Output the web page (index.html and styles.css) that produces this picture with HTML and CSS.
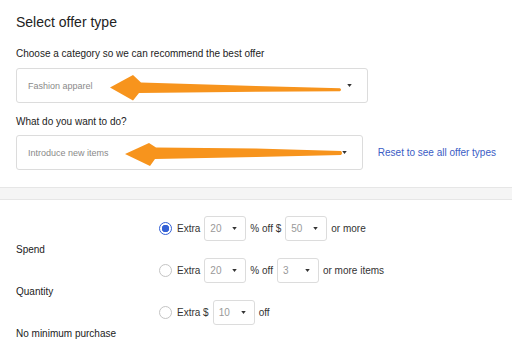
FILE: index.html
```html
<!DOCTYPE html>
<html lang="en">
<head>
    <meta charset="UTF-8">
    <meta name="viewport" content="width=device-width, initial-scale=1.0">
    <title>Select offer type</title>
    <link rel="stylesheet" href="styles.css">
</head>
<body>
    <div class="top">
        <h1>Select offer type</h1>

        <p class="field-label">Choose a category so we can recommend the best offer</p>
        <div class="select big">
            <span class="placeholder">Fashion apparel</span>
            <svg class="caret" width="5" height="3" viewBox="0 0 6 4"><path d="M0 0h6L3 4z"/></svg>
        </div>

        <p class="field-label second">What do you want to do?</p>
        <div class="select-row">
            <div class="select big">
                <span class="placeholder">Introduce new items</span>
                <svg class="caret" width="5" height="3" viewBox="0 0 6 4"><path d="M0 0h6L3 4z"/></svg>
            </div>
            <a href="#" class="reset">Reset to see all offer types</a>
        </div>

        <!-- annotation arrows drawn over the form -->
        <svg class="arrows" width="512" height="187" viewBox="0 0 512 187">
            <path d="M110 87.5 L133 75 L141 82.5 L256 86 L340 88.3 Q342 89.8 340 91.2 L256 91.8 L139 93 L133 100.5 Z"/>
            <path d="M125 154 L149 143 L156 147.5 L256 148.5 L341 151 Q343 153 341 155 L256 157 L155 159 L150 166 Z"/>
        </svg>
    </div>

    <div class="band"></div>

    <div class="offers">
        <div class="offer">
            <div class="option">
                <span class="radio checked"></span>
                <span>Extra</span>
                <div class="select small"><span>20</span><svg class="caret" width="5" height="3" viewBox="0 0 6 4"><path d="M0 0h6L3 4z"/></svg></div>
                <span>% off $</span>
                <div class="select small"><span>50</span><svg class="caret" width="5" height="3" viewBox="0 0 6 4"><path d="M0 0h6L3 4z"/></svg></div>
                <span>or more</span>
            </div>
            <div class="offer-name">Spend</div>
        </div>
        <div class="offer">
            <div class="option">
                <span class="radio"></span>
                <span>Extra</span>
                <div class="select small"><span>20</span><svg class="caret" width="5" height="3" viewBox="0 0 6 4"><path d="M0 0h6L3 4z"/></svg></div>
                <span>% off</span>
                <div class="select small"><span>3</span><svg class="caret" width="5" height="3" viewBox="0 0 6 4"><path d="M0 0h6L3 4z"/></svg></div>
                <span>or more items</span>
            </div>
            <div class="offer-name">Quantity</div>
        </div>
        <div class="offer">
            <div class="option">
                <span class="radio"></span>
                <span>Extra $</span>
                <div class="select small"><span>10</span><svg class="caret" width="5" height="3" viewBox="0 0 6 4"><path d="M0 0h6L3 4z"/></svg></div>
                <span>off</span>
            </div>
            <div class="offer-name">No minimum purchase</div>
        </div>
    </div>
</body>
</html>
```

FILE: styles.css
```css
body {
    margin: 0;
    font-family: "Liberation Sans", Arial, sans-serif;
    color: #333;
    background: #fff;
}
.top {
    position: relative;
    padding: 14px 16px 17px;
}
h1 {
    margin: 0;
    font-size: 14px;
    line-height: 16px;
    font-weight: normal;
    color: #222;
}
.field-label {
    margin: 18px 0 8px;
    font-size: 10px;
    line-height: 12px;
    color: #222;
}
.field-label.second {
    margin: 13px 0 7px;
}
.select {
    display: flex;
    align-items: center;
    box-sizing: border-box;
    border: 1px solid #dcdcdc;
    border-radius: 3px;
    background: #fff;
}
.select.big {
    width: 352px;
    height: 35px;
    padding: 0 15px 0 11px;
    font-size: 9px;
}
.placeholder {
    color: #8a8a8a;
}
.caret {
    margin-left: auto;
    fill: #333;
}
.select-row {
    display: flex;
    align-items: center;
    gap: 15px;
}
.reset {
    font-size: 10px;
    color: #3a5cc5;
    text-decoration: none;
    white-space: nowrap;
}
.arrows {
    position: absolute;
    top: 0;
    left: 0;
    fill: #f7941d;
}
.band {
    height: 11px;
    background: #f5f5f5;
    border-top: 1px solid #e6e6e6;
    border-bottom: 1px solid #e6e6e6;
}
.offers {
    padding: 16px 16px 0;
}
.offer {
    display: grid;
    grid-template-columns: 143px 1fr;
    grid-template-rows: 25px 17px;
    font-size: 10px;
}
.option {
    grid-column: 2;
    grid-row: 1;
    display: flex;
    align-items: center;
    gap: 4px;
}
.offer-name {
    grid-column: 1;
    grid-row: 2;
    align-self: center;
    color: #222;
}
.radio {
    box-sizing: border-box;
    width: 13px;
    height: 13px;
    border: 1px solid #c4c4c4;
    border-radius: 50%;
    margin-right: 1px;
}
.radio.checked {
    border-color: #3461d6;
    background: radial-gradient(circle, #3461d6 0 3.5px, #fff 4px);
}
.select.small {
    width: 42px;
    height: 25px;
    padding: 0 8px 0 5px;
    color: #999;
}
```
